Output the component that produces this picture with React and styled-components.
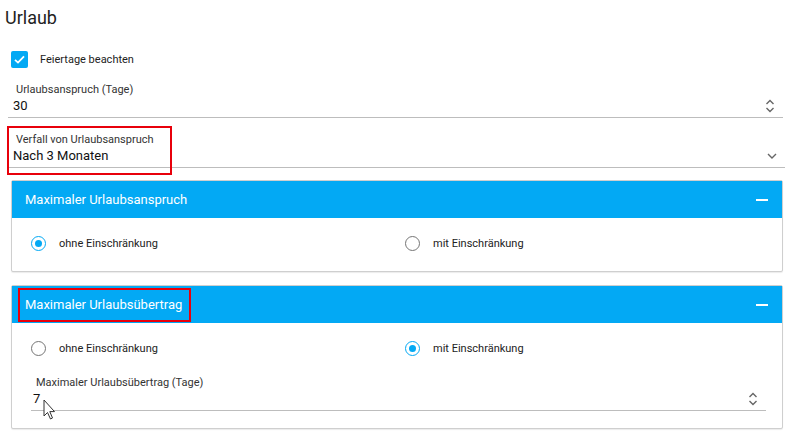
import React from "react";
import styled, { createGlobalStyle } from "styled-components";

const GlobalStyle = createGlobalStyle`
  html, body { margin: 0; padding: 0; background: #fff; }
  body { font-family: Roboto, "Liberation Sans", Arial, sans-serif; color: #212121; }
`;

const Page = styled.div`
  width: 795px;
  height: 436px;
  padding: 0 10px 0 8px;
  box-sizing: border-box;
  overflow: hidden;
  display: flex;
  flex-direction: column;
`;

const Title = styled.h1`
  margin: 0;
  padding: 6px 0 0 0;
  margin-left: -3px;
  font-size: 18px;
  font-weight: 400;
  line-height: 24px;
  color: #222;
  height: 38px;
  box-sizing: border-box;
`;

const CheckRow = styled.label`
  display: flex;
  align-items: center;
  gap: 12px;
  height: 26px;
  margin: 8px 0 0 3px;
  font-size: 11px;
  color: #222;
`;

const CheckBox = styled.span`
  width: 17px;
  height: 17px;
  border-radius: 2px;
  background: #03a9f4;
  display: flex;
  align-items: center;
  justify-content: center;
`;

const Field = styled.div`
  position: relative;
  display: flex;
  flex-direction: column;
  border-bottom: 1px solid #bdbdbd;
  margin-top: ${({ top }) => top}px;
  margin-left: ${({ inset }) => inset || 0}px;
  margin-right: ${({ insetRight }) => insetRight || 0}px;
  padding: 0 8px 2px ${({ padLeft }) => padLeft ?? 5}px;
`;

const FieldLabel = styled.span`
  font-size: 11px;
  line-height: 14px;
  color: #333;
  padding-left: 3px;
`;

const FieldValue = styled.div`
  display: flex;
  align-items: center;
  justify-content: space-between;
  font-size: 13px;
  line-height: 18px;
  color: #111;
`;

const Highlight = styled.span`
  position: absolute;
  border: 2px solid #e8000b;
  pointer-events: none;
  left: ${({ l }) => l}px;
  top: ${({ t }) => t}px;
  width: ${({ w }) => w}px;
  height: ${({ h }) => h}px;
  box-sizing: border-box;
`;

const Panel = styled.section`
  margin: ${({ top }) => top}px 2px 0 3px;
  border: 1px solid #cfcfcf;
  border-radius: 2px;
  box-shadow: 0 1px 1px rgba(0, 0, 0, 0.08);
  background: #fff;
`;

const PanelHeader = styled.header`
  position: relative;
  height: 37px;
  background: #03a9f4;
  color: #fff;
  display: flex;
  align-items: center;
  justify-content: space-between;
  padding: 0 14px 0 13px;
  font-size: 13px;
`;

const Minus = styled.span`
  width: 12px;
  height: 2px;
  background: #fff;
`;

const PanelBody = styled.div`
  padding: ${({ pad }) => pad};
`;

const RadioRow = styled.div`
  display: grid;
  grid-template-columns: 374px 1fr;
  padding-left: 19px;
  height: 26px;
  align-items: center;
`;

const RadioItem = styled.label`
  display: flex;
  align-items: center;
  gap: 13px;
  font-size: 11px;
  color: #222;
`;

const RadioCircle = styled.span`
  width: 15px;
  height: 15px;
  box-sizing: border-box;
  border-radius: 50%;
  border: 1.5px solid ${({ on }) => (on ? "#03a9f4" : "#757575")};
  display: flex;
  align-items: center;
  justify-content: center;
  &::after {
    content: "";
    width: 7px;
    height: 7px;
    border-radius: 50%;
    background: ${({ on }) => (on ? "#03a9f4" : "transparent")};
  }
`;

const Cursor = styled.svg`
  position: absolute;
  left: 12px;
  top: 23px;
`;

const Spinner = () => (
  <svg width="10" height="14" viewBox="0 0 10 14">
    <path d="M1.5 5 L5 1.5 L8.5 5 M1.5 9 L5 12.5 L8.5 9" fill="none" stroke="#666" strokeWidth="1.4" />
  </svg>
);

const Chevron = () => (
  <svg width="10" height="8" viewBox="0 0 10 8">
    <path d="M1 2 L5 6 L9 2" fill="none" stroke="#666" strokeWidth="1.4" />
  </svg>
);

const Radio = ({ on, children }) => (
  <RadioItem>
    <RadioCircle on={on ? 1 : 0} />
    {children}
  </RadioItem>
);

export default function App() {
  return (
    <>
      <GlobalStyle />
      <Page>
        <Title>Urlaub</Title>
        <CheckRow>
          <CheckBox>
            <svg width="13" height="13" viewBox="0 0 13 13">
              <path d="M2 6.8 L5 9.6 L11 3.4" fill="none" stroke="#fff" strokeWidth="1.8" />
            </svg>
          </CheckBox>
          Feiertage beachten
        </CheckRow>
        <Field top={11} insetRight={2}>
          <FieldLabel>Urlaubsanspruch (Tage)</FieldLabel>
          <FieldValue>
            30
            <Spinner />
          </FieldValue>
        </Field>
        <Field top={15}>
          <FieldLabel>Verfall von Urlaubsanspruch</FieldLabel>
          <FieldValue>
            Nach 3 Monaten
            <Chevron />
          </FieldValue>
          <Highlight l={-1} t={-7} w={165} h={49} />
        </Field>
        <Panel top={12}>
          <PanelHeader>
            Maximaler Urlaubsanspruch
            <Minus />
          </PanelHeader>
          <PanelBody pad="12px 0 15px 0">
            <RadioRow>
              <Radio on>ohne Einschränkung</Radio>
              <Radio>mit Einschränkung</Radio>
            </RadioRow>
          </PanelBody>
        </Panel>
        <Panel top={13}>
          <PanelHeader>
            Maximaler Urlaubsübertrag
            <Minus />
            <Highlight l={6} t={2} w={173} h={34} />
          </PanelHeader>
          <PanelBody pad="12px 16px 17px 0">
            <RadioRow>
              <Radio>ohne Einschränkung</Radio>
              <Radio on>mit Einschränkung</Radio>
            </RadioRow>
            <Field top={15} inset={19} padLeft={2}>
              <FieldLabel>Maximaler Urlaubsübertrag (Tage)</FieldLabel>
              <FieldValue>
                7
                <Spinner />
              </FieldValue>
              <Cursor width="13" height="22" viewBox="0 0 13 22">
                <path d="M1 1 L1 17 L4.5 13.5 L7.5 20 L9.5 19 L6.8 12.6 L11.5 12.6 Z" fill="#fff" stroke="#333" strokeWidth="1" />
              </Cursor>
            </Field>
          </PanelBody>
        </Panel>
      </Page>
    </>
  );
}
